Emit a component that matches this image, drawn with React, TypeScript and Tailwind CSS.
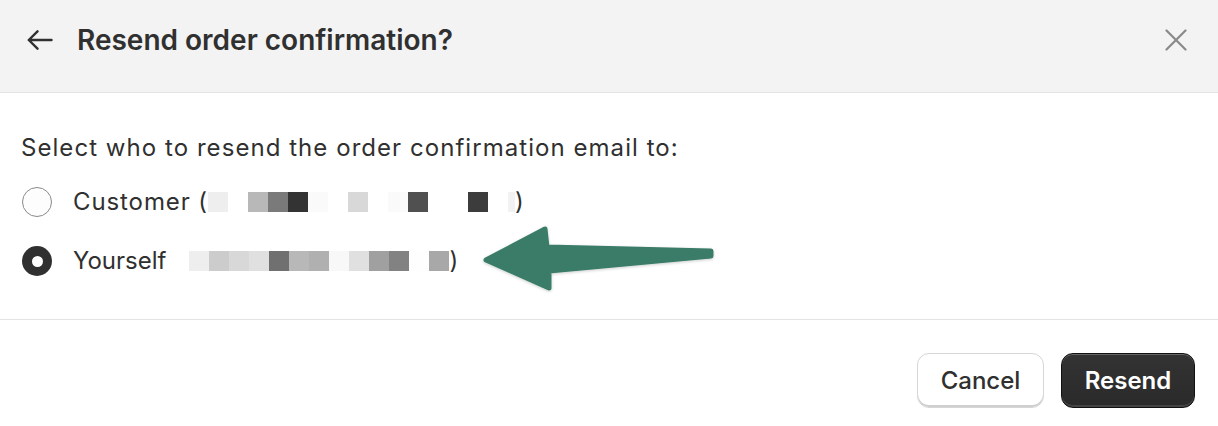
const customerBlocks = [
  "#eeeeee", "#ffffff", "#b8b8b8", "#7a7a7a", "#333333", "#fafafa", "#ffffff",
  "#d8d8d8", "#ffffff", "#fafafa", "#505050", "#ffffff", "#ffffff", "#3c3c3c", "#ffffff",
];

const yourselfBlocks = [
  "#eeeeee", "#cccccc", "#d8d8d8", "#e0e0e0", "#707070", "#b8b8b8", "#b0b0b0",
  "#f8f8f8", "#e0e0e0", "#a0a0a0", "#828282", "#fefefe", "#a8a8a8",
];

function Redacted({ colors, tail }: { colors: string[]; tail?: string }) {
  return (
    <span className="inline-flex items-center">
      {colors.map((c, i) => (
        <span key={i} className="inline-block w-[20px] h-[20px]" style={{ backgroundColor: c }} />
      ))}
      {tail && <span className="inline-block w-[7px] h-[20px]" style={{ backgroundColor: tail }} />}
    </span>
  );
}

export default function App() {
  return (
    <div
      className="relative w-[1218px] h-[426px] bg-white text-[#303030] overflow-hidden"
      style={{ fontFamily: "Inter, 'Noto Sans', sans-serif" }}
    >
      {/* Header */}
      <div className="h-[93px] bg-[#f3f3f3] border-b border-[#e3e3e3] flex items-center pl-[27px] pr-[31px] pb-[13px]">
        <svg width="26" height="20" viewBox="0 0 26 20" fill="none" stroke="#303030" strokeWidth="2.4" strokeLinecap="round" strokeLinejoin="round">
          <path d="M24.5 10H1.8M10.5 1.3L1.8 10L10.5 18.7" />
        </svg>
        <h1 className="ml-[24px] text-[28px] font-semibold">Resend order confirmation?</h1>
        <svg className="ml-auto" width="22" height="22" viewBox="0 0 22 22" fill="none" stroke="#8a8a8a" strokeWidth="2.2" strokeLinecap="round">
          <path d="M1.5 1.5L20.5 20.5M20.5 1.5L1.5 20.5" />
        </svg>
      </div>

      {/* Body */}
      <div className="pt-[39px] pb-[42px] pl-[21px] border-b border-[#e3e3e3] text-[24px]">
        <p className="leading-[32px] tracking-[1.05px]">Select who to resend the order confirmation email to:</p>

        <div className="mt-[22px] flex items-center h-[32px]">
          <span className="w-[30px] h-[30px] rounded-full border border-[#8a8a8a] bg-[#fdfdfd] ml-[1px]" />
          <span className="ml-[21px] leading-[32px] flex items-center tracking-[0.9px]">
            Customer (<Redacted colors={customerBlocks} tail="#f2f2f2" />)
          </span>
        </div>

        <div className="mt-[27px] flex items-center h-[32px]">
          <span className="w-[30px] h-[30px] rounded-full bg-[#303030] ml-[1px] flex items-center justify-center">
            <span className="w-[11px] h-[11px] rounded-full bg-white" />
          </span>
          <span className="ml-[21px] leading-[32px] flex items-center">
            Yourself
            <span className="ml-[23px] flex items-center">
              <Redacted colors={yourselfBlocks} />)
            </span>
          </span>
        </div>
      </div>

      {/* Footer */}
      <div className="flex justify-end gap-[17px] pt-[33px] pr-[23px]">
        <button className="w-[127px] h-[55px] rounded-[12px] bg-white border border-[#d6d6d6] shadow-[inset_0_-2px_0_#cfcfcf] text-[24px] font-medium text-[#303030]">
          Cancel
        </button>
        <button className="w-[134px] h-[55px] rounded-[12px] bg-gradient-to-b from-[#333333] to-[#2a2a2a] border border-[#111111] shadow-[inset_0_1px_0_rgba(255,255,255,0.25),inset_0_-2px_0_rgba(255,255,255,0.12)] text-[24px] font-semibold text-white">
          Resend
        </button>
      </div>

      {/* Annotation arrow */}
      <svg className="absolute left-0 top-0 pointer-events-none" width="1218" height="426" viewBox="0 0 1218 426">
        <defs>
          <filter id="sh" x="-10%" y="-30%" width="120%" height="160%">
            <feDropShadow dx="0" dy="1" stdDeviation="1.5" floodColor="#000" floodOpacity="0.2" />
          </filter>
        </defs>
        <polygon
          points="486,260 545,229 547,247 711,251 711,256 549,271 549,288"
          fill="#3a7c69"
          stroke="#3a7c69"
          strokeWidth="5"
          strokeLinejoin="round"
          filter="url(#sh)"
        />
      </svg>
    </div>
  );
}
